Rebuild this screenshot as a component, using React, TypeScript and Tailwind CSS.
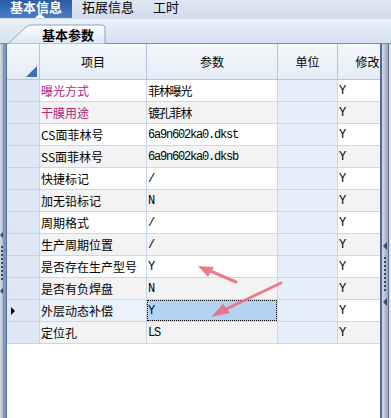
import React from "react";

const rows = [
  { item: "曝光方式", val: "菲林曝光", pink: true },
  { item: "干膜用途", val: "镀孔菲林", pink: true },
  { item: "CS面菲林号", val: "6a9n602ka0.dkst" },
  { item: "SS面菲林号", val: "6a9n602ka0.dksb" },
  { item: "快捷标记", val: "/" },
  { item: "加无铅标记", val: "N" },
  { item: "周期格式", val: "/" },
  { item: "生产周期位置", val: "/" },
  { item: "是否存在生产型号", val: "Y" },
  { item: "是否有负焊盘", val: "N" },
  { item: "外层动态补偿", val: "Y", selected: true },
  { item: "定位孔", val: "LS" },
];

const cjk = { fontFamily: '"Noto Sans CJK SC", "Noto Sans", sans-serif' };
const mono = { fontFamily: '"Liberation Mono", "Noto Sans CJK SC", monospace' };

function SplitterGrip() {
  return (
    <div className="flex flex-col items-center gap-[3px]">
      <span className="block w-0 h-0 border-y-[4px] border-y-transparent border-r-[4px] border-r-[#2d4a78]" />
      <div className="flex flex-col gap-[2px] my-[4px]">
        {Array.from({ length: 9 }).map((_, i) => (
          <span key={i} className="block w-[2px] h-[2px] bg-[#2d4a78]" />
        ))}
      </div>
      <span className="block w-0 h-0 border-y-[4px] border-y-transparent border-r-[4px] border-r-[#2d4a78]" />
    </div>
  );
}

export default function App() {
  return (
    <div className="relative w-[391px] h-[418px] overflow-hidden bg-white flex flex-col" style={cjk}>
      {/* top tabs */}
      <div className="h-[20px] flex items-start bg-gradient-to-b from-[#dfe8f3] to-[#cfdcec] border-b border-[#eef3f9]">
        <div className="relative w-[72px] h-[18px] bg-gradient-to-b from-[#2a5ba4] to-[#4a7ec6] flex justify-center">
          <span className="text-white font-bold text-[13px] leading-[14px]">基本信息</span>
          <span className="absolute bottom-0 left-[35px] w-0 h-0 border-x-[5px] border-x-transparent border-b-[5px] border-b-white" />
        </div>
        <span className="ml-[2px] w-[68px] text-center text-[13px] leading-[14px] text-black">拓展信息</span>
        <span className="ml-[11px] text-[13px] leading-[14px] text-black">工时</span>
      </div>

      {/* sub tab strip */}
      <div className="h-[24px] flex items-end bg-gradient-to-b from-[#e9f0f8] to-[#d4e1f1] border-b border-[#6d8fc2]">
        <div className="relative ml-[8px] w-[98px] h-[20px] -mb-[1px] flex items-center justify-end pr-[12px]">
          <svg className="absolute inset-0" width="98" height="20" viewBox="0 0 98 20">
            <defs>
              <linearGradient id="tabg" x1="0" y1="0" x2="0" y2="1">
                <stop offset="0" stopColor="#ffffff" />
                <stop offset="1" stopColor="#dbe6f4" />
              </linearGradient>
            </defs>
            <path d="M0 20 L18 3 Q20 1 23 1 L94 1 Q97 1 97 4 L97 20 Z" fill="url(#tabg)" stroke="#8aa3c4" strokeWidth="1" />
          </svg>
          <span className="relative font-bold text-[13px] leading-[13px] text-black">基本参数</span>
        </div>
      </div>

      {/* body */}
      <div className="flex-1 flex">
        <div className="w-[7px] flex bg-[#c4cedc]">
          <div className="w-[3px] bg-gradient-to-r from-[#d5dde8] to-[#aab8cc] flex flex-col items-start pt-[187px]">
            <SplitterGrip />
          </div>
          <div className="w-[3px] bg-[#8396b4]" />
          <div className="w-[1px] bg-[#56719c]" />
        </div>

        <div className="flex-1 overflow-hidden bg-white">
          <div className="grid grid-cols-[33px_107px_131px_60px_60px] w-[391px] text-[12px] text-black">
            {/* header */}
            <div className="relative h-[36px] bg-gradient-to-b from-[#f5f8fc] to-[#e4ecf6] border-r border-b border-[#b4c6de]">
              <span className="absolute right-[2px] bottom-[2px] w-0 h-0 border-l-[11px] border-l-transparent border-b-[11px] border-b-[#3b6fbf]" />
            </div>
            {["项目", "参数", "单位", "修改"].map((h) => (
              <div
                key={h}
                className="h-[36px] flex items-center justify-center pt-[1px] bg-gradient-to-b from-[#f5f8fc] to-[#e4ecf6] border-r border-b border-[#b4c6de] text-[12px]"
              >
                {h}
              </div>
            ))}

            {rows.map((r, i) => {
              const grey = i % 2 === 1;
              const base = grey ? "bg-[#f3f3f3]" : "bg-white";
              return (
                <React.Fragment key={r.item}>
                  <div className="h-[22px] bg-[#dde7f5] border-r border-b border-[#c3d2e7] flex items-center pl-[4px]">
                    {r.selected && (
                      <span className="block w-0 h-0 border-y-[4px] border-y-transparent border-l-[4px] border-l-black" />
                    )}
                  </div>
                  <div
                    className={`h-[22px] border-r border-b border-[#c8d7eb] flex items-center pl-[1px] whitespace-nowrap ${
                      r.selected ? "bg-[#eaf2fc]" : base
                    } ${r.pink ? "text-[#b0267c]" : "text-black"}`}
                  >
                    {r.item}
                  </div>
                  <div
                    className={`h-[22px] border-r border-b border-[#c8d7eb] flex items-center whitespace-nowrap ${
                      r.selected ? "bg-[#b3d3f5]" : base
                    }`}
                  >
                    {r.selected ? (
                      <div className="w-full h-full border border-dotted border-black flex items-center" style={mono}>
                        {r.val}
                      </div>
                    ) : (
                      <span className="pl-[1px] tracking-[-1.2px]" style={/[\u4e00-\u9fff]/.test(r.val) ? cjk : mono}>
                        {r.val}
                      </span>
                    )}
                  </div>
                  <div className="h-[22px] bg-[#e6eefa] border-r border-b border-[#c8d7eb]" />
                  <div className={`h-[22px] border-r border-b border-[#c8d7eb] flex items-center pl-[1px] ${base}`} style={mono}>
                    Y
                  </div>
                </React.Fragment>
              );
            })}
          </div>
        </div>

        <div className="w-[11px] flex">
          <div className="w-[2px] bg-[#4f6c99]" />
          <div className="w-[6px] bg-gradient-to-r from-[#d7dbe2] to-[#9ea7b5] flex flex-col items-center pt-[198px]">
            <SplitterGrip />
          </div>
          <div className="w-[1px] bg-[#5a6f90]" />
          <div className="w-[2px] bg-[#dfe5ee]" />
        </div>
      </div>

      {/* annotation arrows */}
      <svg className="absolute inset-0 pointer-events-none" width="391" height="418" viewBox="0 0 391 418">
        <g stroke="#ec6f80" strokeWidth="3" fill="#ec6f80" strokeLinecap="round" opacity="0.9">
          <line x1="236" y1="282" x2="208" y2="270" />
          <polygon points="198,266 214,267 208,277" stroke="none" />
          <line x1="281" y1="283" x2="222" y2="311" />
          <polygon points="211,317 230,313 223,304" stroke="none" />
        </g>
      </svg>
    </div>
  );
}
